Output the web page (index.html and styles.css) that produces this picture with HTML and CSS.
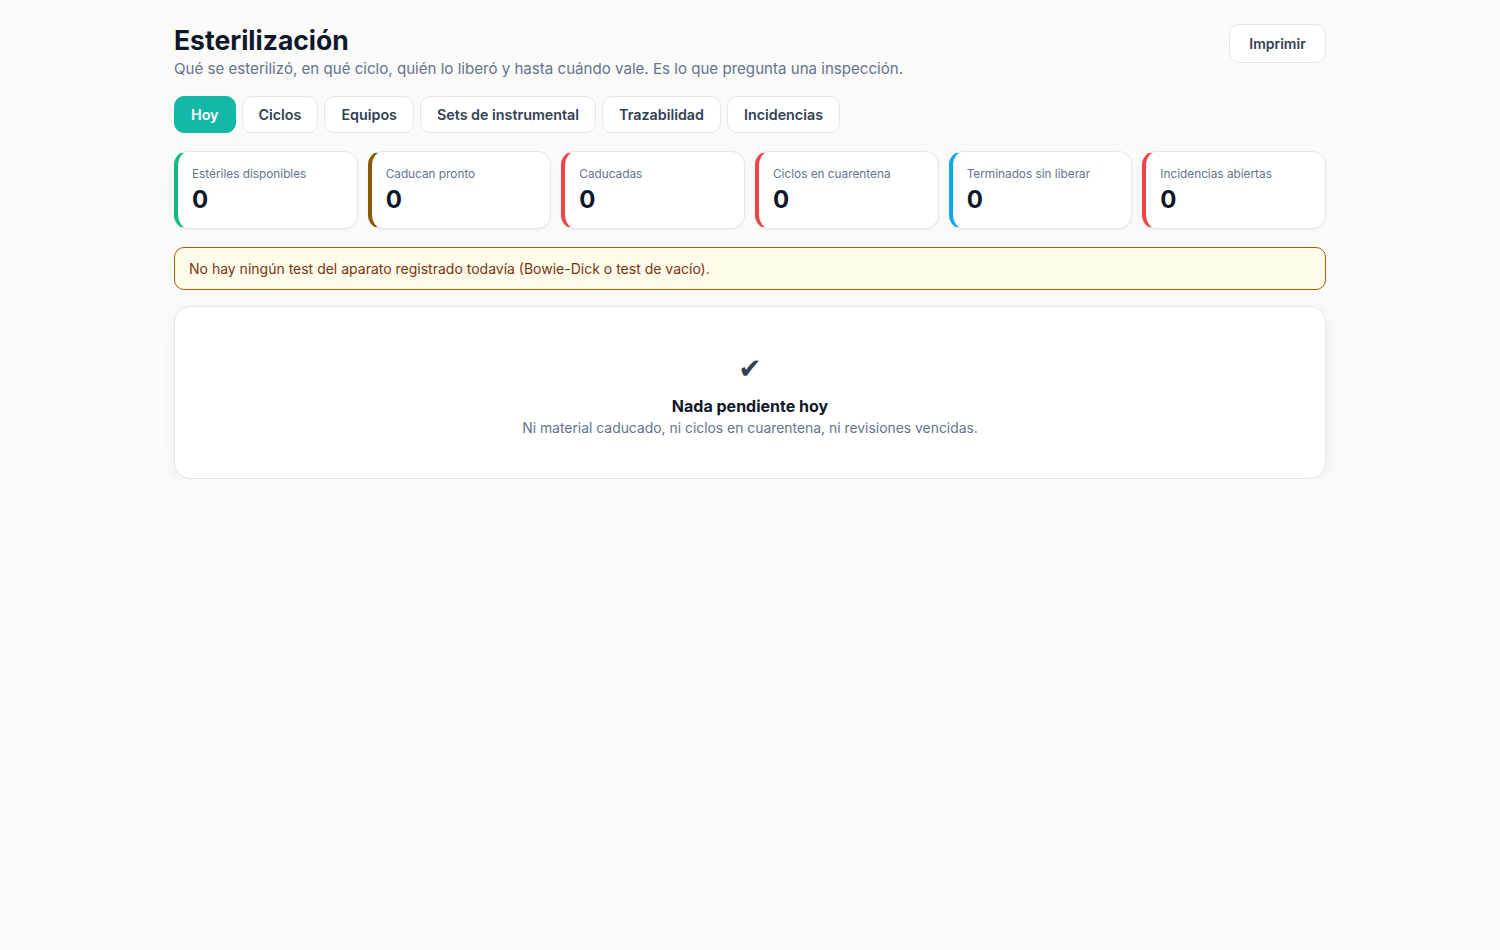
FILE: index.html
```
<!DOCTYPE html>
<html lang="es">
<head>
<meta charset="utf-8">
<title>Esterilización</title>
<link rel="stylesheet" href="styles.css">
</head>
<body>
<main class="page">
  <header class="header">
    <div class="titles">
      <h1 class="title">Esterilización</h1>
      <p class="subtitle">Qué se esterilizó, en qué ciclo, quién lo liberó y hasta cuándo vale. Es lo que pregunta una inspección.</p>
    </div>
    <button class="btn">Imprimir</button>
  </header>

  <nav class="tabs">
    <button class="tab active">Hoy</button>
    <button class="tab">Ciclos</button>
    <button class="tab">Equipos</button>
    <button class="tab">Sets de instrumental</button>
    <button class="tab">Trazabilidad</button>
    <button class="tab">Incidencias</button>
  </nav>

  <section class="stats">
    <div class="stat green"><div class="stat-label">Estériles disponibles</div><div class="stat-value">0</div></div>
    <div class="stat brown"><div class="stat-label">Caducan pronto</div><div class="stat-value">0</div></div>
    <div class="stat red"><div class="stat-label">Caducadas</div><div class="stat-value">0</div></div>
    <div class="stat red"><div class="stat-label">Ciclos en cuarentena</div><div class="stat-value">0</div></div>
    <div class="stat blue"><div class="stat-label">Terminados sin liberar</div><div class="stat-value">0</div></div>
    <div class="stat red"><div class="stat-label">Incidencias abiertas</div><div class="stat-value">0</div></div>
  </section>

  <div class="alert">No hay ningún test del aparato registrado todavía (Bowie-Dick o test de vacío).</div>

  <section class="empty">
    <div class="empty-icon">✔</div>
    <div class="empty-title">Nada pendiente hoy</div>
    <div class="empty-text">Ni material caducado, ni ciclos en cuarentena, ni revisiones vencidas.</div>
  </section>
</main>
</body>
</html>
```

FILE: styles.css
```
* { box-sizing: border-box; }
html, body { margin: 0; padding: 0; }
body {
  background: #fafaf9;
  font-family: Inter, "Noto Sans", "Liberation Sans", sans-serif;
  color: #0f172a;
}
.page {
  width: 1152px;
  margin: 0 auto;
  padding-top: 24px;
}
.header {
  display: flex;
  justify-content: space-between;
  align-items: flex-start;
}
.title {
  margin: 0;
  font-size: 26.5px;
  line-height: 32px;
  font-weight: 700;
  color: #0f172a;
}
.subtitle {
  margin: 1px 0 0;
  font-size: 15.1px;
  line-height: 24px;
  color: #64748b;
}
.btn {
  font-family: inherit;
  font-size: 14px;
  font-weight: 600;
  line-height: 19px;
  color: #334155;
  background: #fff;
  border: 1px solid #e2e8f0;
  border-radius: 10px;
  padding: 9px 18px;
  width: 97px;
}
.tabs {
  display: flex;
  gap: 6px;
  margin-top: 15px;
}
.tab {
  font-family: inherit;
  font-size: 14.3px;
  font-weight: 600;
  line-height: 19px;
  color: #334155;
  background: #fff;
  border: 1px solid #e2e8f0;
  border-radius: 10px;
  padding: 8px 16px;
}
.tab.active {
  background: #14b8a6;
  border-color: #14b8a6;
  color: #fff;
}
.stats {
  display: grid;
  grid-template-columns: repeat(6, 1fr);
  gap: 10px;
  margin-top: 18px;
}
.stat {
  background: #fff;
  border: 1px solid #e2e8f0;
  border-left: 4px solid #10b981;
  border-radius: 14px;
  padding: 13px 14px 12px 14px;
  height: 78px;
  box-shadow: 0 1px 3px rgba(15, 23, 42, 0.05);
}
.stat.green { border-left-color: #10b981; }
.stat.brown { border-left-color: #8a5a00; }
.stat.red { border-left-color: #ef4444; }
.stat.blue { border-left-color: #0ea5e9; }
.stat-label {
  font-size: 11.8px;
  line-height: 18px;
  color: #64748b;
}
.stat-value {
  font-size: 24px;
  line-height: 30px;
  font-weight: 700;
  color: #0f172a;
  margin-top: 2px;
}
.alert {
  margin-top: 18px;
  background: #fffbeb;
  border: 1px solid #a16207;
  border-radius: 10px;
  padding: 11px 14px;
  font-size: 14px;
  line-height: 19px;
  color: #78350f;
}
.empty {
  margin-top: 16px;
  background: #fff;
  border: 1px solid #e2e8f0;
  border-radius: 16px;
  padding: 44px 24px 40px;
  text-align: center;
  box-shadow: 0 4px 18px rgba(15, 23, 42, 0.05);
}
.empty-icon {
  font-family: "DejaVu Sans", sans-serif;
  font-size: 28px;
  line-height: 36px;
  color: #334155;
}
.empty-title {
  margin-top: 7px;
  font-size: 16px;
  line-height: 24px;
  font-weight: 700;
  color: #0f172a;
}
.empty-text {
  font-size: 13.9px;
  line-height: 20px;
  color: #64748b;
}
```
